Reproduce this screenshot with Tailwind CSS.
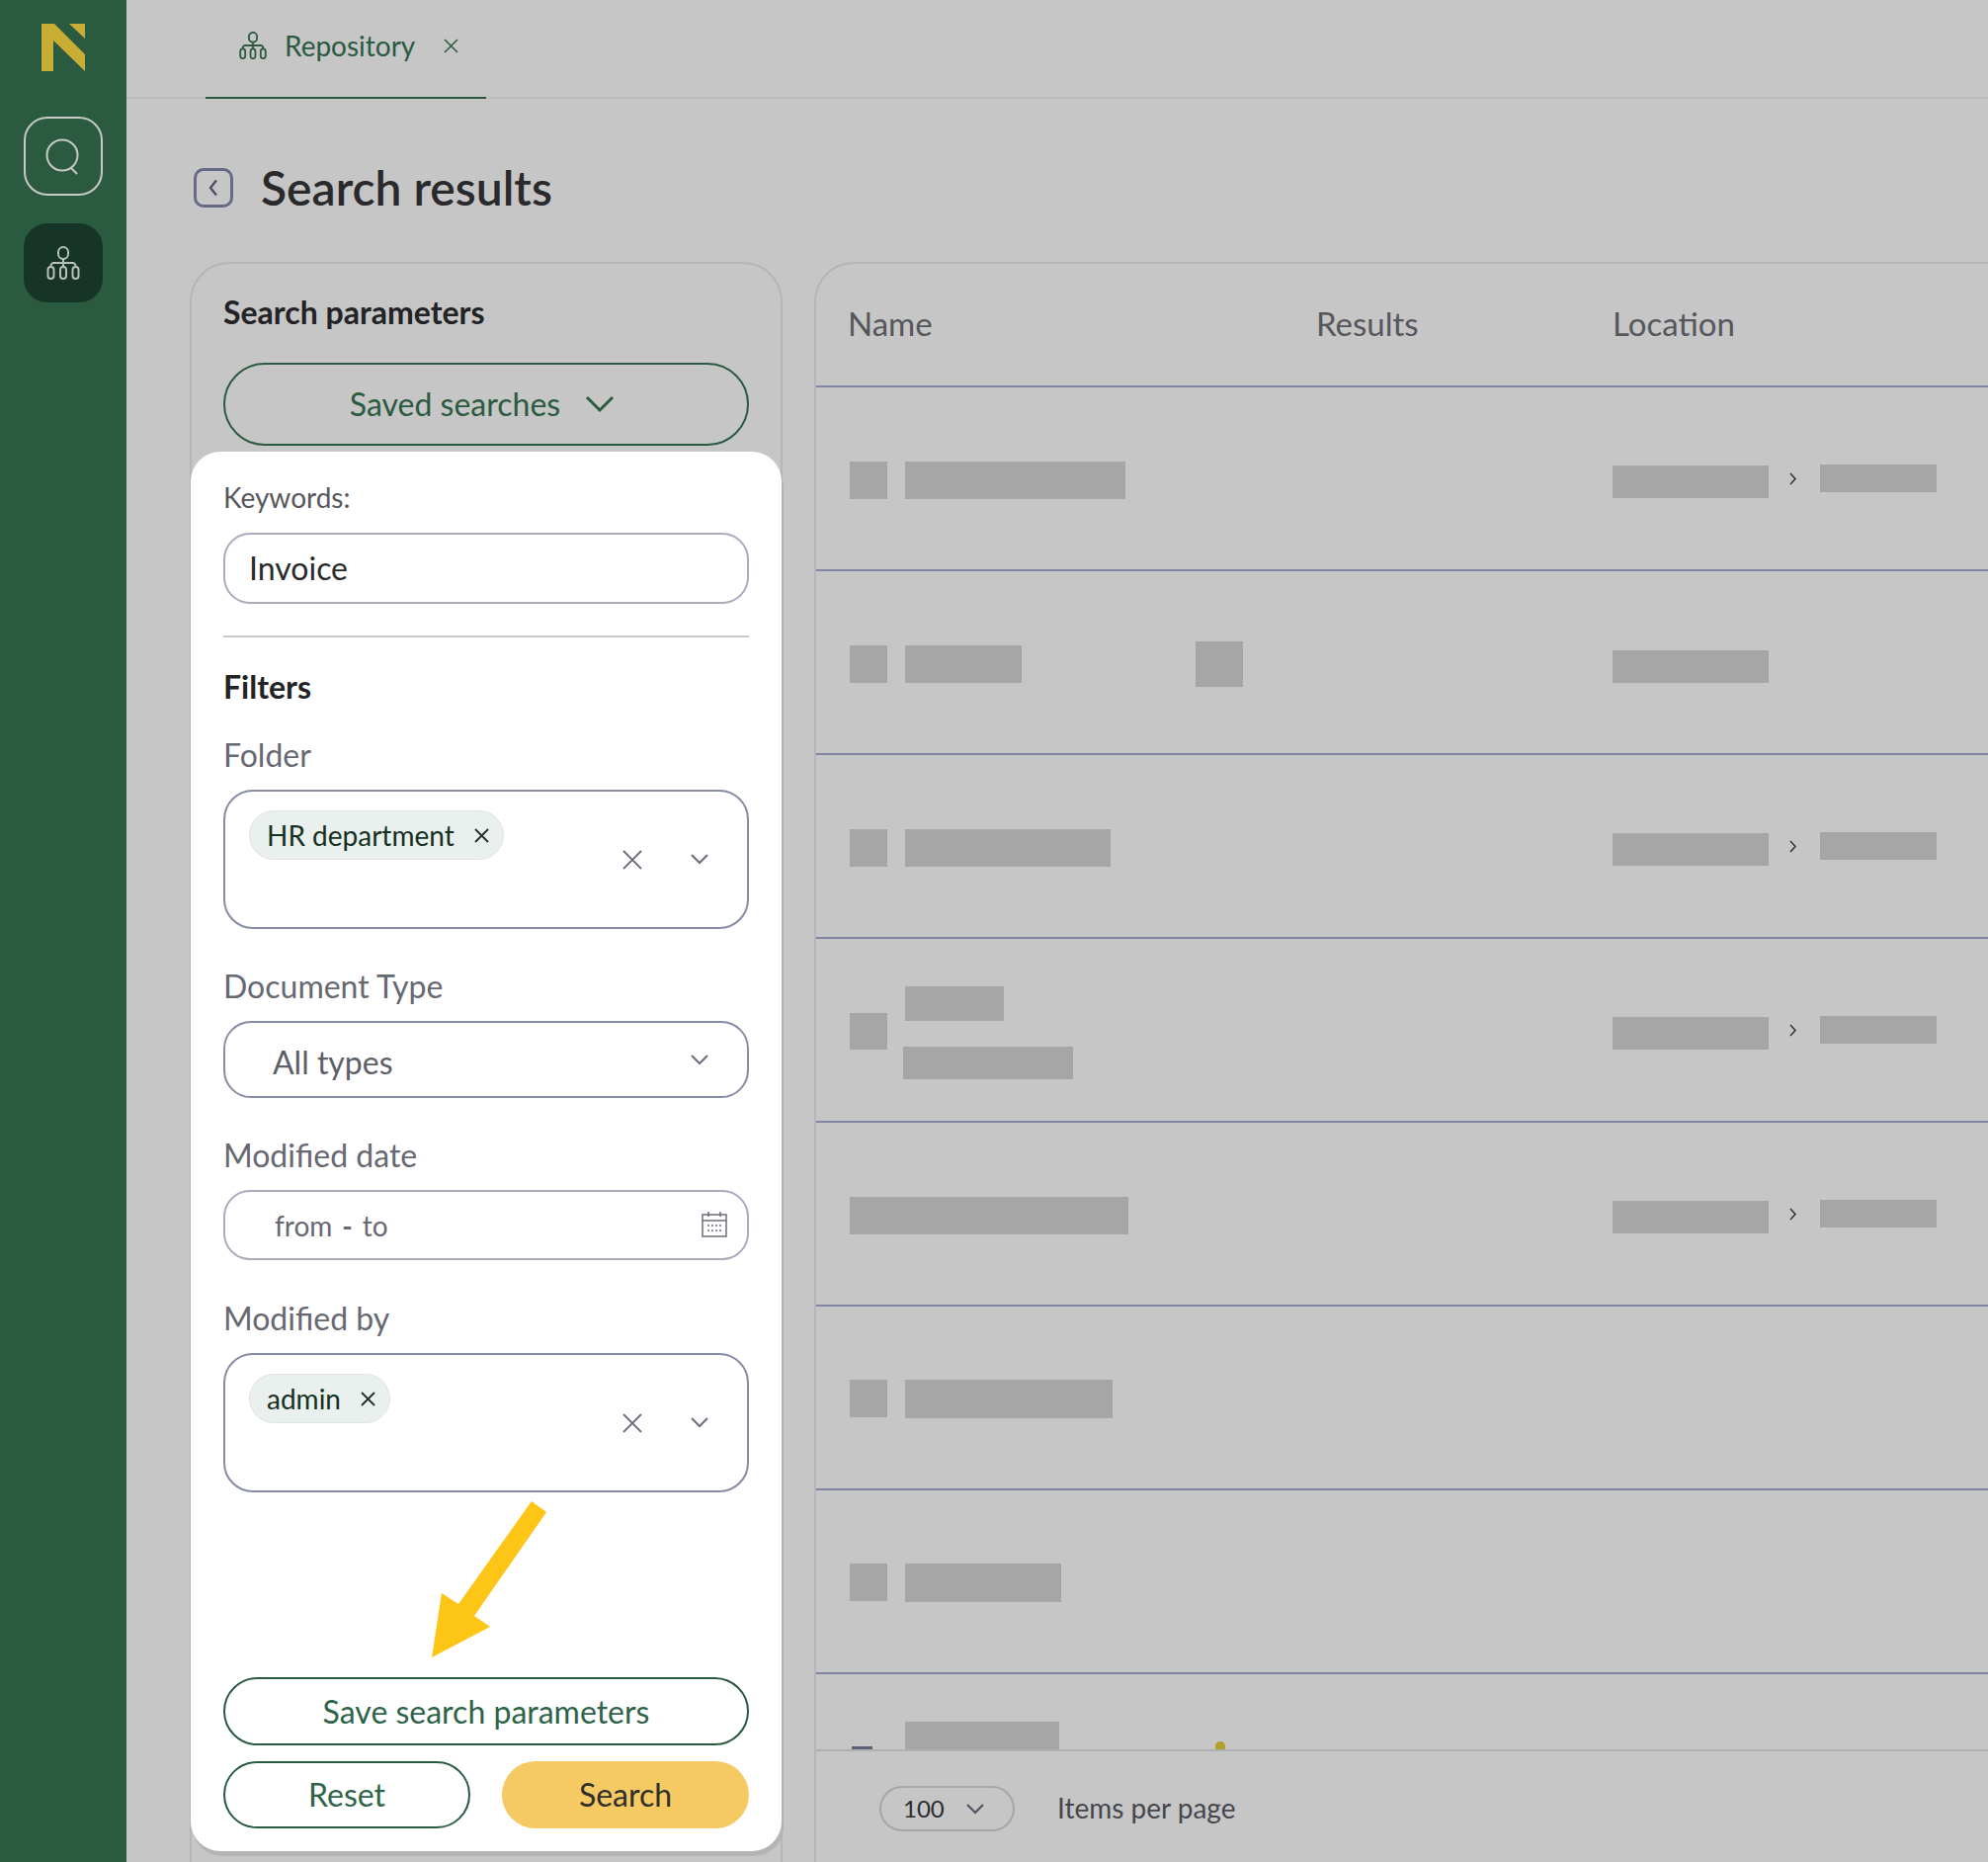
<!DOCTYPE html>
<html lang="en">
<head>
  <meta charset="UTF-8" />
  <title>Search results</title>
  <script src="https://cdn.jsdelivr.net/npm/@tailwindcss/browser@4"></script>
</head>
<body class="[font-family:Lato,sans-serif] bg-[#c6c6c6]">
  <div class="flex h-[1884px] w-[2012px] overflow-hidden">
    <!-- SIDEBAR -->
    <aside class="w-[128px] shrink-0 bg-[#2a5a40] flex flex-col items-center">
      <svg class="mt-[24px]" width="44" height="48" viewBox="0 0 44 48" fill="#c9ad34">
        <polygon points="0,0 13,0 44,31 44,48 12,17 12,48 0,48" />
        <polygon points="28,0 44,0 44,15" />
      </svg>
      <div class="mt-[46px] w-[80px] h-[80px] rounded-[24px] border-2 border-[#c6c9c4] flex items-center justify-center">
        <svg width="38" height="38" viewBox="0 0 38 38" fill="none" stroke="#c6c9c4" stroke-width="2">
          <circle cx="18" cy="18" r="15.500" />
          <path d="M27 31l6 6" />
        </svg>
      </div>
      <div class="mt-[28px] w-[80px] h-[80px] rounded-[24px] bg-[#173526] flex items-center justify-center">
        <svg width="34" height="34" viewBox="0 0 34 34" fill="none" stroke="#b9c0ba" stroke-width="2">
          <rect x="12" y="1" width="10" height="12" rx="5" />
          <path d="M17 13v8M4.500 21v-1a3 3 0 0 1 3-3h19a3 3 0 0 1 3 3v1" />
          <rect x="1.500" y="21" width="6" height="12" rx="3" />
          <rect x="14" y="21" width="6" height="12" rx="3" />
          <rect x="26.500" y="21" width="6" height="12" rx="3" />
        </svg>
      </div>
    </aside>

    <div class="flex-1 min-w-0 flex flex-col">
      <!-- TABS -->
      <div class="h-[100px] shrink-0 border-b-2 border-[#bcbcbc] pl-[80px] flex">
        <div class="w-[284px] h-[100px] border-b-2 border-[#2a5a40] flex items-center pl-[34px] pb-[6px] text-[#2a5a40]">
          <svg width="28" height="28" viewBox="0 0 34 34" fill="none" stroke="#2a5a40" stroke-width="2.200">
            <rect x="12" y="1" width="10" height="12" rx="5" />
            <path d="M17 13v8M4.500 21v-1a3 3 0 0 1 3-3h19a3 3 0 0 1 3 3v1" />
            <rect x="1.500" y="21" width="6" height="12" rx="3" />
            <rect x="14" y="21" width="6" height="12" rx="3" />
            <rect x="26.500" y="21" width="6" height="12" rx="3" />
          </svg>
          <span class="ml-[18px] text-[28px] leading-none">Repository</span>
          <svg class="ml-[29px]" width="15" height="15" viewBox="0 0 15 15" fill="none" stroke="#2a5a40" stroke-width="1.500">
            <path d="M1 1l13 13M14 1L1 14" />
          </svg>
        </div>
      </div>

      <!-- TITLE -->
      <div class="h-[165px] shrink-0 flex items-center pl-[68px] pt-[14px]">
        <div class="w-[40px] h-[40px] rounded-[10px] border-[3px] border-[#666b84] flex items-center justify-center">
          <svg width="12" height="18" viewBox="0 0 12 18" fill="none" stroke="#4c5060" stroke-width="2.400"><path d="M9 1.500L3 9l6 7.500" /></svg>
        </div>
        <h1 class="ml-[28px] text-[48px] leading-none font-semibold text-[#2a2a2c]">Search results</h1>
      </div>

      <div class="flex-1 min-h-0 flex pl-[64px] gap-[32px]">
        <!-- LEFT PANEL -->
        <div class="w-[600px] shrink-0 h-[1640px] rounded-t-[40px] border-2 border-[#b5b5b5] flex flex-col">
          <h2 class="pl-[32px] pt-[29px] text-[32px] leading-[40px] font-bold text-[#232326]">Search parameters</h2>
          <div class="ml-[32px] mt-[31px] w-[532px] h-[84px] rounded-full border-2 border-[#2a5a40] flex items-center justify-center pr-[8px] text-[32px] text-[#2a5a40]">
            Saved searches
            <svg class="ml-[25px]" width="30" height="18" viewBox="0 0 30 18" fill="none" stroke="#2a5a40" stroke-width="3"><path d="M2 2l13 13L28 2" /></svg>
          </div>
          <!-- WHITE CARD -->
          <div class="mt-[6px] -mx-px h-[1416px] rounded-[30px] bg-white shadow-[2px_5px_0_#b4b4b4] px-[33px] flex flex-col">
            <label class="mt-[29px] text-[28px] leading-[34px] text-[#55575d]">Keywords:</label>
            <div class="mt-[19px] h-[72px] rounded-[27px] border-2 border-[#a7abbb] flex items-center pl-[24px] text-[32px] text-[#2a2a2c]">Invoice</div>
            <div class="mt-[32px] h-[2px] bg-[#c8c8c8]"></div>
            <h3 class="mt-[30px] text-[32px] leading-[40px] font-bold text-[#232326]">Filters</h3>
            <label class="mt-[29px] text-[32px] leading-[40px] text-[#666872]">Folder</label>
            <div class="relative mt-[15px] h-[141px] rounded-[30px] border-2 border-[#868ca4] pl-[24px] pt-[19px]">
              <span class="inline-flex items-center h-[50px] rounded-full bg-[#eaf0ed] border border-[#e0e4e2] pl-[17px] pr-[14px] text-[28px] text-[#15311f]">HR department
                <svg class="ml-[20px]" width="15" height="15" viewBox="0 0 15 15" fill="none" stroke="#22302a" stroke-width="1.800"><path d="M1 1l13 13M14 1L1 14" /></svg>
              </span>
              <svg class="absolute right-[106px] top-[59px]" width="20" height="20" viewBox="0 0 20 20" fill="none" stroke="#6b6e7b" stroke-width="1.800"><path d="M1 1l18 18M19 1L1 19" /></svg>
              <svg class="absolute right-[38px] top-[62px]" width="20" height="13" viewBox="0 0 20 13" fill="none" stroke="#6b6e7b" stroke-width="2"><path d="M2 2l8 8 8-8" /></svg>
            </div>
            <label class="mt-[38px] text-[32px] leading-[40px] text-[#666872]">Document Type</label>
            <div class="relative mt-[15px] h-[78px] rounded-[28px] border-2 border-[#868ca4] flex items-center pl-[48px] pt-[6px] text-[32px] text-[#5c5e68]">All types
              <svg class="absolute right-[38px] top-[31px]" width="20" height="13" viewBox="0 0 20 13" fill="none" stroke="#6b6e7b" stroke-width="2"><path d="M2 2l8 8 8-8" /></svg>
            </div>
            <label class="mt-[38px] text-[32px] leading-[40px] text-[#666872]">Modified date</label>
            <div class="relative mt-[15px] h-[71px] rounded-[27px] border-2 border-[#a7abbb] flex items-center pl-[50px] text-[28px] text-[#666872]">
              <span>from</span><span class="mx-[10px] font-bold">-</span><span>to</span>
              <svg class="absolute right-[20px] top-[20px]" width="26" height="26" viewBox="0 0 26 26" fill="none" stroke="#6b6e7b" stroke-width="1.500">
                <rect x="1" y="3" width="24" height="22" />
                <path d="M1 9h24M7 0v5M19 0v5" />
                <path d="M6 14h14M6 19h14" stroke-dasharray="2 2" />
              </svg>
            </div>
            <label class="mt-[39px] text-[32px] leading-[40px] text-[#666872]">Modified by</label>
            <div class="relative mt-[15px] h-[141px] rounded-[30px] border-2 border-[#868ca4] pl-[24px] pt-[19px]">
              <span class="inline-flex items-center h-[50px] rounded-full bg-[#eaf0ed] border border-[#e0e4e2] pl-[17px] pr-[14px] text-[28px] text-[#15311f]">admin
                <svg class="ml-[20px]" width="15" height="15" viewBox="0 0 15 15" fill="none" stroke="#22302a" stroke-width="1.800"><path d="M1 1l13 13M14 1L1 14" /></svg>
              </span>
              <svg class="absolute right-[106px] top-[59px]" width="20" height="20" viewBox="0 0 20 20" fill="none" stroke="#6b6e7b" stroke-width="1.800"><path d="M1 1l18 18M19 1L1 19" /></svg>
              <svg class="absolute right-[38px] top-[62px]" width="20" height="13" viewBox="0 0 20 13" fill="none" stroke="#6b6e7b" stroke-width="2"><path d="M2 2l8 8 8-8" /></svg>
            </div>
            <!-- yellow annotation arrow -->
            <svg class="ml-[211px] mt-[9px]" width="116" height="158" viewBox="0 0 116 158" fill="#fdc516">
              <polygon points="101,0 116,11 43,116 59,127 0,158 10,93 27,104" />
            </svg>
            <div class="mt-[20px] h-[69px] rounded-full border-2 border-[#2a5a40] flex items-center justify-center text-[32px] text-[#2e6349]">Save search parameters</div>
            <div class="mt-[16px] flex justify-between">
              <div class="w-[250px] h-[68px] rounded-full border-2 border-[#2a5a40] flex items-center justify-center text-[32px] text-[#2e6349]">Reset</div>
              <div class="w-[250px] h-[68px] rounded-full bg-[#f6ca63] flex items-center justify-center text-[32px] text-[#2f2f2b]">Search</div>
            </div>
          </div>
        </div>

        <!-- RESULTS TABLE -->
        <div class="flex-1 min-w-0 h-[1640px] rounded-tl-[40px] border-l-2 border-t-2 border-[#b5b5b5] flex flex-col">
          <div class="h-[125px] shrink-0 flex items-center pb-[2px] text-[33px] text-[#55575d] border-b-2 border-[#7f84a0]">
            <span class="ml-[32px] w-[474px]">Name</span>
            <span class="w-[300px]">Results</span>
            <span>Location</span>
          </div>

          <div class="h-[1378px] shrink-0 overflow-hidden flex flex-col">
            <!-- row 1 -->
            <div class="h-[186px] shrink-0 border-b-2 border-[#7f84a0] flex items-center pl-[34px] pt-[4px]">
              <div class="w-[38px] h-[38px] bg-[#a6a6a6]"></div>
              <div class="ml-[18px] w-[223px] h-[38px] bg-[#a6a6a6]"></div>
              <div class="ml-[493px] w-[158px] h-[33px] mt-[3px] bg-[#a6a6a6]"></div>
              <svg class="ml-[21px] mb-[4px]" width="8" height="13" viewBox="0 0 8 13" fill="none" stroke="#333" stroke-width="1.500"><path d="M1 1l5 5.500-5 5.500" /></svg>
              <div class="ml-[23px] w-[118px] h-[28px] mb-[4px] bg-[#a6a6a6]"></div>
            </div>
            <!-- row 2 -->
            <div class="h-[186px] shrink-0 border-b-2 border-[#7f84a0] flex items-center pl-[34px] pt-[4px]">
              <div class="w-[38px] h-[38px] bg-[#a6a6a6]"></div>
              <div class="ml-[18px] w-[118px] h-[38px] bg-[#a6a6a6]"></div>
              <div class="ml-[176px] w-[48px] h-[46px] bg-[#a6a6a6]"></div>
              <div class="ml-[374px] w-[158px] h-[33px] mt-[4px] bg-[#a6a6a6]"></div>
            </div>
            <!-- row 3 -->
            <div class="h-[186px] shrink-0 border-b-2 border-[#7f84a0] flex items-center pl-[34px] pt-[4px]">
              <div class="w-[38px] h-[38px] bg-[#a6a6a6]"></div>
              <div class="ml-[18px] w-[208px] h-[38px] bg-[#a6a6a6]"></div>
              <div class="ml-[508px] w-[158px] h-[33px] mt-[3px] bg-[#a6a6a6]"></div>
              <svg class="ml-[21px] mb-[4px]" width="8" height="13" viewBox="0 0 8 13" fill="none" stroke="#333" stroke-width="1.500"><path d="M1 1l5 5.500-5 5.500" /></svg>
              <div class="ml-[23px] w-[118px] h-[28px] mb-[4px] bg-[#a6a6a6]"></div>
            </div>
            <!-- row 4 -->
            <div class="h-[186px] shrink-0 border-b-2 border-[#7f84a0] flex items-center pl-[34px] pt-[3px]">
              <div class="w-[38px] h-[37px] bg-[#a6a6a6]"></div>
              <div class="ml-[16px] w-[172px] flex flex-col gap-[26px] pt-[3px]">
                <div class="ml-[2px] w-[100px] h-[35px] bg-[#a6a6a6]"></div>
                <div class="w-[172px] h-[33px] bg-[#a6a6a6]"></div>
              </div>
              <div class="ml-[546px] w-[158px] h-[33px] mt-[3px] bg-[#a6a6a6]"></div>
              <svg class="ml-[21px] mb-[3px]" width="8" height="13" viewBox="0 0 8 13" fill="none" stroke="#333" stroke-width="1.500"><path d="M1 1l5 5.500-5 5.500" /></svg>
              <div class="ml-[23px] w-[118px] h-[28px] mb-[3px] bg-[#a6a6a6]"></div>
            </div>
            <!-- row 5 -->
            <div class="h-[186px] shrink-0 border-b-2 border-[#7f84a0] flex items-center pl-[34px] pt-[4px]">
              <div class="w-[282px] h-[38px] bg-[#a6a6a6]"></div>
              <div class="ml-[490px] w-[158px] h-[33px] mt-[3px] bg-[#a6a6a6]"></div>
              <svg class="ml-[21px] mb-[4px]" width="8" height="13" viewBox="0 0 8 13" fill="none" stroke="#333" stroke-width="1.500"><path d="M1 1l5 5.500-5 5.500" /></svg>
              <div class="ml-[23px] w-[118px] h-[28px] mb-[4px] bg-[#a6a6a6]"></div>
            </div>
            <!-- row 6 -->
            <div class="h-[186px] shrink-0 border-b-2 border-[#7f84a0] flex items-center pl-[34px] pt-[2px]">
              <div class="w-[38px] h-[38px] bg-[#a6a6a6]"></div>
              <div class="ml-[18px] w-[210px] h-[39px] bg-[#a6a6a6]"></div>
            </div>
            <!-- row 7 -->
            <div class="h-[186px] shrink-0 border-b-2 border-[#7f84a0] flex items-center pl-[34px] pt-[2px]">
              <div class="w-[38px] h-[38px] bg-[#a6a6a6]"></div>
              <div class="ml-[18px] w-[158px] h-[39px] bg-[#a6a6a6]"></div>
            </div>
            <!-- row 8, cut off by the footer -->
            <div class="h-[186px] shrink-0 pl-[36px] pt-[48px] flex items-start">
              <div class="w-[21px] h-[3px] mt-[25px] bg-[#5c6178]"></div>
              <div class="ml-[33px] w-[156px] h-[37px] bg-[#a6a6a6]"></div>
              <div class="ml-[158px] mt-[20px] w-[10px] h-[16px] rounded-full bg-[#b3a12c]"></div>
            </div>
          </div>

          <!-- FOOTER -->
          <div class="border-t-2 border-[#b0b0b0] flex items-center pl-[64px] pt-[35px]">
            <div class="w-[137px] h-[46px] rounded-full border-2 border-[#a6a6a6] flex items-center pl-[22px] text-[24px] text-[#2c2c2e]">100
              <svg class="ml-[21px]" width="20" height="12" viewBox="0 0 20 12" fill="none" stroke="#4c5060" stroke-width="2"><path d="M2 2l8 8 8-8" /></svg>
            </div>
            <span class="ml-[43px] mb-[3px] text-[28px] text-[#45474c]">Items per page</span>
          </div>
        </div>
      </div>
    </div>
  </div>
</body>
</html>
